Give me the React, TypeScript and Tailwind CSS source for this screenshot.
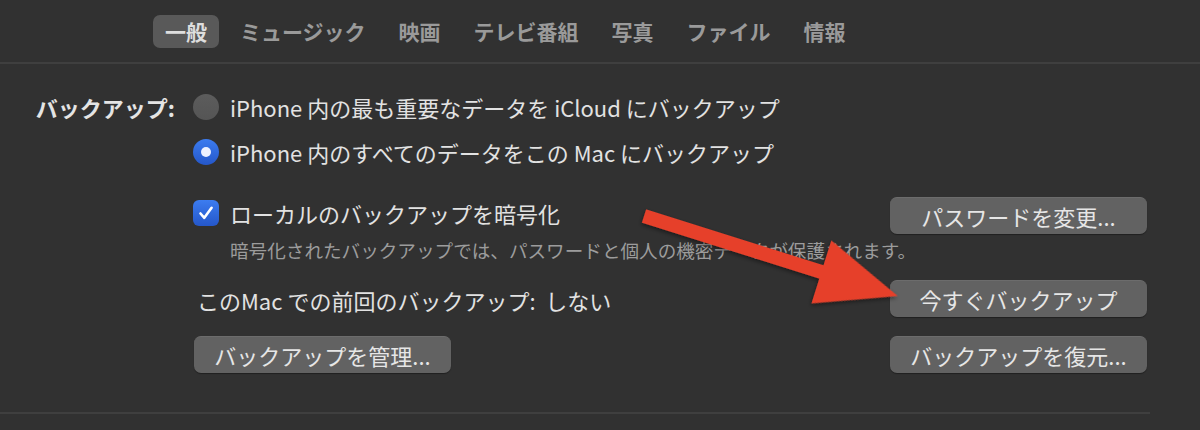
import React from "react";

const FONT = '"Noto Sans CJK JP", "Noto Sans", sans-serif';

function Tab({ label, active }: { label: string; active?: boolean }) {
  return (
    <div
      className={
        "h-[33px] px-[12px] flex items-center rounded-[7px] text-[21px] font-bold leading-none " +
        (active ? "bg-[#595959] text-[#dedede]" : "text-[#9a9a9a]")
      }
    >
      {label}
    </div>
  );
}

function Btn({ label, className = "" }: { label: string; className?: string }) {
  return (
    <div
      className={
        "h-[37px] w-[257px] rounded-[7px] bg-[#626262] border-t border-[#6c6c6c] shadow-[0_1px_1px_rgba(0,0,0,0.35)] flex items-center justify-center text-[22px] text-[#e6e6e6] leading-none " +
        className
      }
    >
      {label}
    </div>
  );
}

function Radio({ checked }: { checked?: boolean }) {
  if (checked) {
    return (
      <div className="w-[26px] h-[26px] rounded-full bg-gradient-to-b from-[#3c7cf0] to-[#2557c9] flex items-center justify-center shrink-0">
        <div className="w-[10px] h-[10px] rounded-full bg-[#eef2ff]" />
      </div>
    );
  }
  return (
    <div className="w-[26px] h-[26px] rounded-full bg-gradient-to-b from-[#5c5c5c] to-[#555555] shrink-0" />
  );
}

function Checkbox() {
  return (
    <div className="w-[26px] h-[26px] rounded-[6px] bg-gradient-to-b from-[#3c7cf0] to-[#2557c9] flex items-center justify-center shrink-0">
      <svg width="18" height="18" viewBox="0 0 18 18">
        <path d="M3.5 9.5 L7.3 13.8 L14.6 3.8" fill="none" stroke="#ffffff" strokeWidth="2.6" strokeLinecap="round" strokeLinejoin="round" />
      </svg>
    </div>
  );
}

export default function App() {
  const L = 266;
  return (
    <div
      className="relative w-[1200px] h-[430px] bg-[#313131] overflow-hidden text-[#e2e2e2]"
      style={{ fontFamily: FONT }}
    >
      {/* Tabs */}
      <div className="h-[62px] flex items-start pt-[15px] pl-[153px] gap-[9px]">
        <Tab label="一般" active />
        <Tab label="ミュージック" />
        <Tab label="映画" />
        <Tab label="テレビ番組" />
        <Tab label="写真" />
        <Tab label="ファイル" />
        <Tab label="情報" />
      </div>
      <div className="h-[2px] bg-[#3f3f3f]" />

      {/* Main */}
      <div className="flex pt-[30px]">
        <div className="w-[175px] h-[26px] flex items-center justify-end text-[22px] font-bold leading-none text-[#e4e4e4]">
          バックアップ:
        </div>
        <div className="ml-[18px] w-[954px] flex flex-col">
          <div className="h-[26px] flex items-center gap-[11px] text-[22px] leading-none">
            <Radio />
            <span>iPhone 内の最も重要なデータを iCloud にバックアップ</span>
          </div>
          <div className="mt-[19px] h-[26px] flex items-center gap-[11px] text-[22px] leading-none">
            <Radio checked />
            <span>iPhone 内のすべてのデータをこの Mac にバックアップ</span>
          </div>
          <div className="mt-[32px] h-[37px] flex items-center justify-between">
            <div className="flex items-center gap-[11px] text-[22px] leading-none mb-[5px]">
              <Checkbox />
              <span>ローカルのバックアップを暗号化</span>
            </div>
            <Btn label="パスワードを変更..." />
          </div>
          <div className="mt-[4px] h-[24px] pl-[37px] flex items-center text-[18.6px] leading-none text-[#9c9c9c]">
            暗号化されたバックアップでは、パスワードと個人の機密データが保護されます。
          </div>
          <div className="mt-[18px] h-[37px] flex items-center justify-between">
            <span className="pl-[4px] text-[22px] leading-none mt-[3px]">このMac での前回のバックアップ:&nbsp;&nbsp;しない</span>
            <Btn label="今すぐバックアップ" />
          </div>
          <div className="mt-[19px] h-[37px] flex items-center justify-between">
            <Btn label="バックアップを管理..." className="ml-[1px] w-[256px]" />
            <Btn label="バックアップを復元..." />
          </div>
        </div>
      </div>
      <div className="mt-[39px] w-[1150px] h-[2px] bg-[#3f3f3f]" />

      {/* Red annotation arrow */}
      <svg className="absolute inset-0 pointer-events-none" width="1200" height="430">
        <defs>
          <filter id="sh" x="-20%" y="-20%" width="140%" height="140%">
            <feDropShadow dx="0" dy="2" stdDeviation="2" floodColor="#000" floodOpacity="0.45" />
          </filter>
        </defs>
        <g transform="translate(644,216) rotate(17.5)" filter="url(#sh)">
          <polygon
            points={`0,-7 ${L - 80},-7 ${L - 80},-33 ${L},0 ${L - 80},33 ${L - 80},7 0,7`}
            fill="#e6402a"
          />
        </g>
      </svg>
    </div>
  );
}
